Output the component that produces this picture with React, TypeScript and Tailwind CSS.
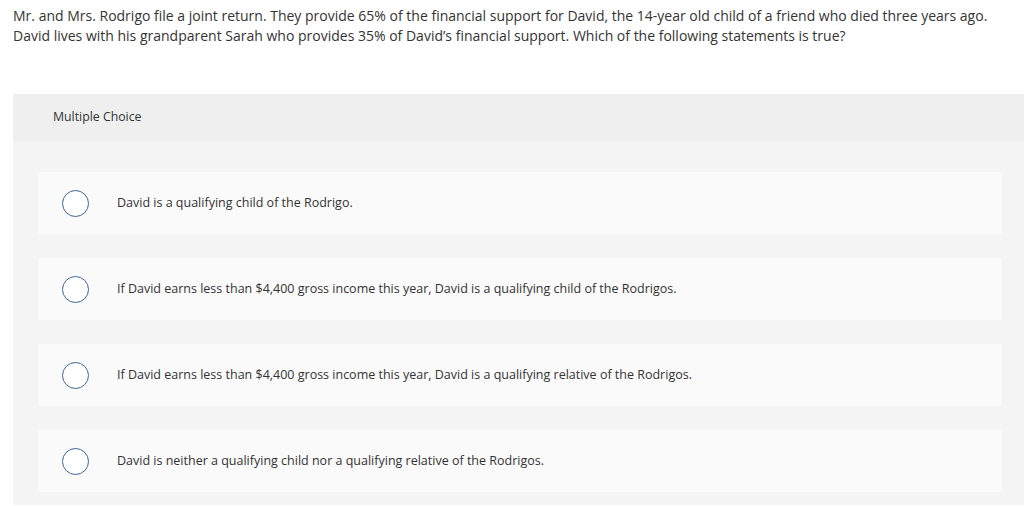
export default function App() {
  const options = [
    "David is a qualifying child of the Rodrigo.",
    "If David earns less than $4,400 gross income this year, David is a qualifying child of the Rodrigos.",
    "If David earns less than $4,400 gross income this year, David is a qualifying relative of the Rodrigos.",
    "David is neither a qualifying child nor a qualifying relative of the Rodrigos.",
  ];
  return (
    <div className="w-[1024px] h-[506px] bg-white overflow-hidden text-[#333333]" style={{ fontFamily: "'Open Sans', 'Noto Sans', sans-serif" }}>
      <p className="pl-[13px] pt-[6px] pr-[20px] text-[14px] leading-[20px]">
        Mr. and Mrs. Rodrigo file a joint return. They provide 65% of the financial support for David, the 14-year old child of a friend who died three years ago. David lives with his grandparent Sarah who provides 35% of David’s financial support. Which of the following statements is true?
      </p>
      <div className="ml-[13px] mt-[48px] bg-[#f4f4f4]">
        <div className="h-[47px] bg-[#efefef] pl-[40px] flex items-center text-[12.3px]">Multiple Choice</div>
        <div className="pt-[31px] pb-[13px] pl-[25px] pr-[22px] flex flex-col gap-[24px]">
          {options.map((o) => (
            <div key={o} className="h-[62px] bg-[#fafafa] rounded-[3px] flex items-center">
              <div className="ml-[24px] w-[27px] h-[27px] rounded-full border-[1.5px] border-[#3a6595] bg-white shrink-0" />
              <span className="ml-[28px] text-[12.5px] pt-[1px]">{o}</span>
            </div>
          ))}
        </div>
      </div>
    </div>
  );
}
